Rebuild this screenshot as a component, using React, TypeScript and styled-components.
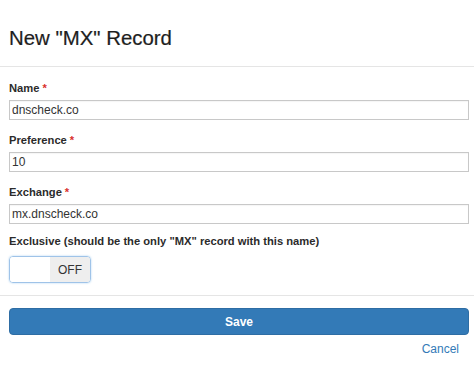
import React from "react";
import styled, { createGlobalStyle } from "styled-components";

const Global = createGlobalStyle`
  html, body { margin: 0; padding: 0; background: #fff; }
  body { font-family: "Liberation Sans", Arial, Helvetica, sans-serif; color: #333; }
  * { box-sizing: border-box; }
`;

const Page = styled.div`
  width: 474px;
  display: flex;
  flex-direction: column;
`;

const Header = styled.div`
  padding: 26px 9px 16px;
  border-bottom: 1px solid #e5e5e5;
`;

const Title = styled.h1`
  margin: 0;
  font-size: 20.4px;
  line-height: 24px;
  font-weight: 400;
  color: #1e1e1e;
  -webkit-text-stroke: 0.2px #1e1e1e;
`;

const Body = styled.div`
  padding: 13px 5px 12px 9px;
  display: flex;
  flex-direction: column;
  border-bottom: 1px solid #e5e5e5;
`;

const Group = styled.div<{ $gap?: number }>`
  display: flex;
  flex-direction: column;
  margin-top: ${(p) => p.$gap ?? 0}px;
`;

const Label = styled.label`
  font-size: 11.2px;
  line-height: 16px;
  font-weight: 700;
  color: #2b2b2b;
  margin-bottom: 4px;
`;

const Req = styled.span`
  color: #d9302c;
  margin-left: 3px;
`;

const Input = styled.input`
  height: 20px;
  width: 100%;
  border: 1px solid #c8c8c8;
  border-radius: 0;
  padding: 0 2px;
  font-family: inherit;
  font-size: 12px;
  color: #333;
  outline: none;
  box-shadow: inset 0 1px 1px rgba(0,0,0,0.04);
`;

const Toggle = styled.div`
  margin-top: 3px;
  width: 82px;
  height: 27px;
  display: flex;
  border: 1px solid #9fc3e8;
  border-radius: 4px;
  overflow: hidden;
  box-shadow: 0 0 2px rgba(102,175,233,0.6);
`;

const ToggleHalf = styled.div<{ $off?: boolean }>`
  flex: 1;
  display: flex;
  align-items: center;
  justify-content: center;
  background: ${(p) => (p.$off ? "#eeeeee" : "#ffffff")};
  font-size: 12px;
  color: #333;
`;

const Footer = styled.div`
  padding: 12px 5px 0 9px;
  display: flex;
  flex-direction: column;
  align-items: stretch;
`;

const SaveButton = styled.button`
  height: 27px;
  width: 100%;
  border: 1px solid #2e6da4;
  border-radius: 4px;
  background: #337ab7;
  color: #fff;
  font-family: inherit;
  font-size: 12px;
  font-weight: 700;
  cursor: pointer;
`;

const Cancel = styled.a`
  align-self: flex-end;
  margin-top: 7px;
  margin-right: 10px;
  font-size: 12px;
  line-height: 14px;
  color: #337ab7;
  text-decoration: none;
`;

export default function App() {
  return (
    <Page>
      <Global />
      <Header>
        <Title>New "MX" Record</Title>
      </Header>
      <Body>
        <Group>
          <Label>
            Name<Req>*</Req>
          </Label>
          <Input defaultValue="dnscheck.co" />
        </Group>
        <Group $gap={12}>
          <Label>
            Preference<Req>*</Req>
          </Label>
          <Input defaultValue="10" />
        </Group>
        <Group $gap={12}>
          <Label>
            Exchange<Req>*</Req>
          </Label>
          <Input defaultValue="mx.dnscheck.co" />
        </Group>
        <Group $gap={9}>
          <Label>Exclusive (should be the only "MX" record with this name)</Label>
          <Toggle>
            <ToggleHalf />
            <ToggleHalf $off>OFF</ToggleHalf>
          </Toggle>
        </Group>
      </Body>
      <Footer>
        <SaveButton>Save</SaveButton>
        <Cancel href="#">Cancel</Cancel>
      </Footer>
    </Page>
  );
}
